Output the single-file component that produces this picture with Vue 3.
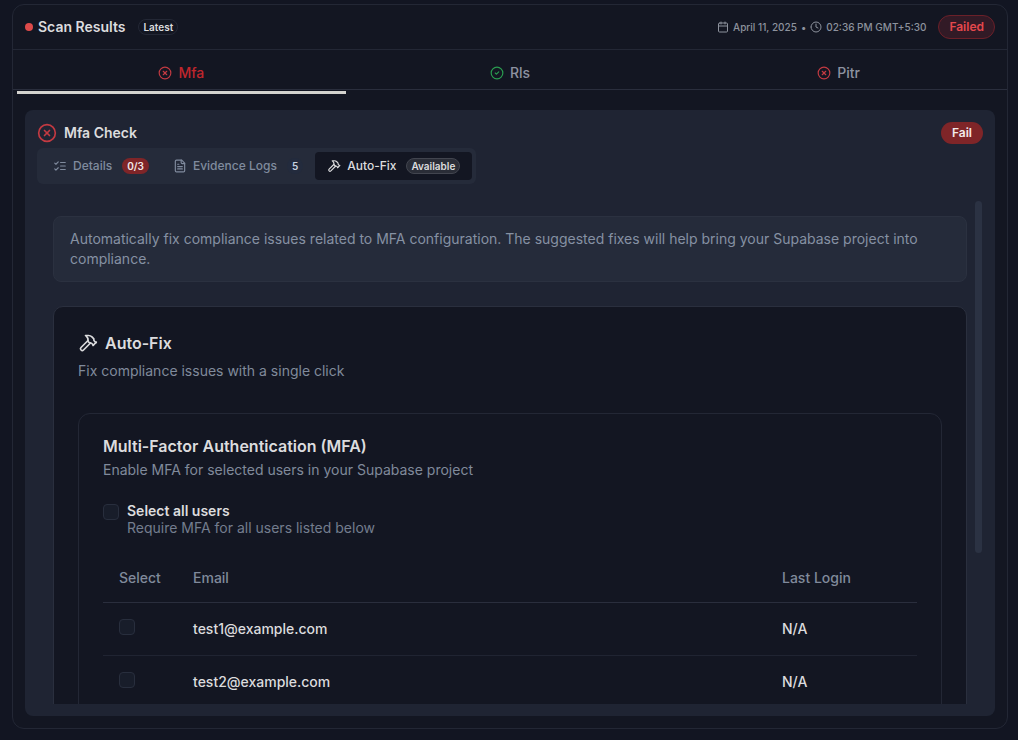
<script setup>
import { ref, computed } from 'vue'

const icons = {
  fail: ['M2 12a10 10 0 1 0 20 0a10 10 0 1 0-20 0', 'm15 9-6 6', 'm9 9 6 6'],
  pass: ['M2 12a10 10 0 1 0 20 0a10 10 0 1 0-20 0', 'm9 12 2 2 4-4'],
  clock: ['M2 12a10 10 0 1 0 20 0a10 10 0 1 0-20 0', 'M12 6v6l4 2'],
  calendar: ['M8 2v4', 'M16 2v4', 'M5 4h14a2 2 0 0 1 2 2v14a2 2 0 0 1-2 2H5a2 2 0 0 1-2-2V6a2 2 0 0 1 2-2', 'M3 10h18'],
  list: ['m3 17 2 2 4-4', 'm3 7 2 2 4-4', 'M13 6h8', 'M13 12h8', 'M13 18h8'],
  file: ['M15 2H6a2 2 0 0 0-2 2v16a2 2 0 0 0 2 2h12a2 2 0 0 0 2-2V7Z', 'M14 2v4a2 2 0 0 0 2 2h4', 'M10 9H8', 'M16 13H8', 'M16 17H8'],
  hammer: [
    'm15 12-8.373 8.373a1 1 0 1 1-3-3L12 9',
    'm18 15 4-4',
    'm21.5 11.5-1.914-1.914A2 2 0 0 1 19 8.172V7l-2.26-2.26a6 6 0 0 0-4.202-1.756L9 2.96l.92.82A6.18 6.18 0 0 1 12 8.4V10l2 2h1.172a2 2 0 0 1 1.414.586L18.5 14.5',
  ],
}

const checks = [
  { name: 'Mfa', status: 'fail' },
  { name: 'Rls', status: 'pass' },
  { name: 'Pitr', status: 'fail' },
]
const activeCheck = ref('Mfa')

const views = [
  { name: 'Details', icon: 'list', badge: '0/3', tone: 'danger' },
  { name: 'Evidence Logs', icon: 'file', badge: '5', tone: 'count' },
  { name: 'Auto-Fix', icon: 'hammer', badge: 'Available', tone: 'outline' },
]
const activeView = ref('Auto-Fix')

const users = ref([
  { email: 'test1@example.com', lastLogin: 'N/A', selected: false },
  { email: 'test2@example.com', lastLogin: 'N/A', selected: false },
])
const allSelected = computed({
  get: () => users.value.every((u) => u.selected),
  set: (v) => users.value.forEach((u) => (u.selected = v)),
})
</script>

<template>
  <main class="page">
    <section class="results">
      <header class="results-head">
        <span class="dot"></span>
        <h1>Scan Results</h1>
        <span class="latest">Latest</span>
        <div class="meta">
          <svg class="icon" viewBox="0 0 24 24"><path v-for="d in icons.calendar" :key="d" :d="d" /></svg>
          <span>April 11, 2025</span>
          <span>•</span>
          <svg class="icon" viewBox="0 0 24 24"><path v-for="d in icons.clock" :key="d" :d="d" /></svg>
          <span>02:36 PM GMT+5:30</span>
        </div>
        <span class="failed">Failed</span>
      </header>

      <nav class="checks" role="tablist">
        <button
          v-for="c in checks"
          :key="c.name"
          type="button"
          role="tab"
          class="check"
          :class="{ active: c.name === activeCheck }"
          :aria-selected="c.name === activeCheck"
          @click="activeCheck = c.name"
        >
          <svg class="icon" :class="c.status" viewBox="0 0 24 24"><path v-for="d in icons[c.status]" :key="d" :d="d" /></svg>
          {{ c.name }}
        </button>
      </nav>

      <div class="panel">
        <div class="panel-head">
          <svg class="icon fail" viewBox="0 0 24 24"><path v-for="d in icons.fail" :key="d" :d="d" /></svg>
          <h2>{{ activeCheck }} Check</h2>
          <span class="fail-badge">Fail</span>
        </div>

        <div class="views" role="tablist">
          <button
            v-for="v in views"
            :key="v.name"
            type="button"
            role="tab"
            class="view"
            :class="{ active: v.name === activeView }"
            :aria-selected="v.name === activeView"
            @click="activeView = v.name"
          >
            <svg class="icon" viewBox="0 0 24 24"><path v-for="d in icons[v.icon]" :key="d" :d="d" /></svg>
            {{ v.name }}
            <span class="tag" :class="v.tone">{{ v.badge }}</span>
          </button>
        </div>

        <div class="scroll">
          <div class="viewport">
            <p class="info">
              Automatically fix compliance issues related to MFA configuration. The suggested fixes will help bring your
              Supabase project into compliance.
            </p>

            <section class="fix">
              <h3>
                <svg class="icon" viewBox="0 0 24 24"><path v-for="d in icons.hammer" :key="d" :d="d" /></svg>
                Auto-Fix
              </h3>
              <p class="muted">Fix compliance issues with a single click</p>

              <div class="mfa">
                <h4>Multi-Factor Authentication (MFA)</h4>
                <p class="muted">Enable MFA for selected users in your Supabase project</p>

                <div class="select-all">
                  <input id="all-users" v-model="allSelected" type="checkbox" />
                  <label for="all-users">
                    <strong>Select all users</strong>
                    <span>Require MFA for all users listed below</span>
                  </label>
                </div>

                <table>
                  <thead>
                    <tr>
                      <th class="col-select">Select</th>
                      <th>Email</th>
                      <th class="col-login">Last Login</th>
                    </tr>
                  </thead>
                  <tbody>
                    <tr v-for="u in users" :key="u.email">
                      <td><input v-model="u.selected" type="checkbox" :aria-label="'Select ' + u.email" /></td>
                      <td>{{ u.email }}</td>
                      <td>{{ u.lastLogin }}</td>
                    </tr>
                  </tbody>
                </table>
              </div>
            </section>
          </div>
          <div class="scrollbar"><div class="thumb"></div></div>
        </div>
      </div>
    </section>
  </main>
</template>

<style>
body {
  margin: 0;
  background: #121522;
}
</style>

<style scoped>
* {
  box-sizing: border-box;
}

.page {
  display: flex;
  height: 100vh;
  padding: 4px 10px 11px 12px;
  background: #121522;
  color: #dcdcde;
  font-family: Inter, "Liberation Sans", sans-serif;
  font-size: 14px;
  line-height: 20px;
}

h1, h2, h3, h4, p {
  margin: 0;
}

button {
  border: 0;
  background: none;
  font: inherit;
  color: inherit;
  cursor: pointer;
}

.icon {
  flex: none;
  width: 14px;
  height: 14px;
  fill: none;
  stroke: currentColor;
  stroke-width: 2;
  stroke-linecap: round;
  stroke-linejoin: round;
}

.icon.fail {
  color: #c33a42;
}

.icon.pass {
  color: #2a9d50;
}

.results {
  display: flex;
  flex: 1;
  flex-direction: column;
  min-width: 0;
  border: 1px solid #232735;
  border-radius: 12px;
  background: #131622;
}

.results-head {
  display: flex;
  flex: none;
  align-items: center;
  height: 45px;
  padding: 0 12px;
  border-bottom: 1px solid #232735;
}

.dot {
  width: 8px;
  height: 8px;
  margin-right: 5px;
  border-radius: 50%;
  background: #dc4a4a;
}

h1 {
  font-size: 14px;
  font-weight: 600;
}

.latest {
  margin-left: 13px;
  padding: 0 4px;
  border: 1px solid #232735;
  border-radius: 9px;
  font-size: 10px;
  font-weight: 600;
  line-height: 14px;
}

.meta {
  display: flex;
  align-items: center;
  gap: 4px;
  margin-left: auto;
  color: #8d929d;
  font-size: 10px;
  font-weight: 500;
}

.meta .icon {
  width: 12px;
  height: 12px;
}

.failed {
  margin-left: 12px;
  padding: 0 10px;
  border: 1px solid #6b2029;
  border-radius: 12px;
  background: #321a26;
  color: #e5484d;
  font-size: 12px;
  font-weight: 600;
  line-height: 22px;
}

.checks {
  display: grid;
  flex: none;
  grid-template-columns: repeat(3, 1fr);
  height: 40px;
  padding: 0 4px;
  border-bottom: 1px solid #2a2e3d;
}

.check {
  position: relative;
  display: flex;
  align-items: center;
  justify-content: center;
  gap: 6px;
  padding: 6px 0 0;
  color: #8d92a0;
  font-weight: 500;
}

.check.active {
  color: #c0262d;
}

.check.active::after {
  position: absolute;
  right: 0;
  bottom: -5px;
  left: 0;
  height: 3px;
  background: #d3d2ce;
  content: "";
}

.panel {
  display: flex;
  flex: 1;
  flex-direction: column;
  min-height: 0;
  margin: 20px 12px 12px;
  padding: 12px;
  border-radius: 8px;
  background: #1f2433;
}

.panel-head {
  display: flex;
  align-items: center;
  gap: 7px;
  height: 22px;
}

.panel-head .icon {
  width: 20px;
  height: 20px;
}

h2 {
  font-size: 14px;
  font-weight: 600;
}

.fail-badge {
  margin-left: auto;
  padding: 0 11px;
  border-radius: 11px;
  background: #7f2528;
  color: #f3e9e9;
  font-size: 12px;
  font-weight: 600;
  line-height: 22px;
}

.views {
  display: flex;
  align-self: flex-start;
  height: 36px;
  margin-top: 4px;
  padding: 4px;
  border-radius: 6px;
  background: #252b3a;
}

.view {
  display: flex;
  align-items: center;
  gap: 6px;
  padding: 0 12px;
  border-radius: 4px;
  color: #808b9e;
  font-size: 12px;
  font-weight: 500;
}

.view.active {
  background: #131622;
  color: #dcdcde;
}

.tag {
  margin-left: 4px;
  padding: 0 5px;
  border-radius: 8px;
  font-size: 10px;
  font-weight: 600;
  line-height: 16px;
}

.tag.danger {
  background: #7f2528;
  color: #f3e9e9;
}

.tag.count {
  background: #232b3d;
  color: #c9d3e0;
}

.tag.outline {
  padding: 0 4px;
  border: 1px solid #42454f;
  background: #2a2d37;
  line-height: 14px;
}

.scroll {
  display: flex;
  flex: 1;
  min-height: 0;
  margin-top: 17px;
}

.viewport {
  flex: 1;
  padding: 15px 8px 16px 16px;
  overflow: auto;
  scrollbar-width: none;
}

.scrollbar {
  width: 8px;
  padding-right: 1px;
}

.thumb {
  height: 70%;
  border-radius: 4px;
  background: #2b3243;
}

.info {
  padding: 12px 16px;
  border: 1px solid #2b3140;
  border-radius: 8px;
  background: #252b3a;
  color: #8691a3;
}

.fix {
  margin-top: 24px;
  padding: 24px;
  border: 1px solid #2a2f3e;
  border-radius: 10px;
  background: #131622;
}

h3 {
  display: flex;
  align-items: center;
  gap: 7px;
  font-size: 16px;
  font-weight: 600;
  line-height: 24px;
}

h3 .icon {
  width: 20px;
  height: 20px;
}

.muted {
  color: #808a9b;
}

h3 + .muted {
  margin-top: 6px;
}

.mfa {
  margin-top: 32px;
  padding: 20px 24px 24px;
  border: 1px solid #232735;
  border-radius: 12px;
}

h4 {
  font-size: 16px;
  font-weight: 600;
  line-height: 24px;
}

h4 + .muted {
  margin-top: 2px;
}

.select-all {
  display: flex;
  gap: 8px;
  margin-top: 22px;
}

.select-all input {
  margin-top: 2px;
}

.select-all label {
  display: grid;
  line-height: 17px;
}

.select-all strong {
  font-weight: 600;
}

.select-all span {
  color: #737d8e;
}

input[type="checkbox"] {
  display: block;
  width: 16px;
  height: 16px;
  margin: 0;
  border: 1px solid #282e3d;
  border-radius: 4px;
  background: #181d2a;
  appearance: none;
}

.select-all input[type="checkbox"] {
  margin-top: 2px;
}

td input[type="checkbox"] {
  margin-bottom: 4px;
}

input[type="checkbox"]:checked {
  background: #d3d2ce;
}

table {
  width: 100%;
  margin-top: 18px;
  border-collapse: collapse;
  table-layout: fixed;
}

th {
  height: 48px;
  padding: 0 16px;
  border-bottom: 1px solid #2a2e3d;
  color: #808a9b;
  font-weight: 500;
  text-align: left;
}

td {
  height: 53px;
  padding: 0 16px;
  border-bottom: 1px solid #202432;
  font-weight: 500;
}

.col-select {
  width: 74px;
}

.col-login {
  width: 151px;
}
</style>
